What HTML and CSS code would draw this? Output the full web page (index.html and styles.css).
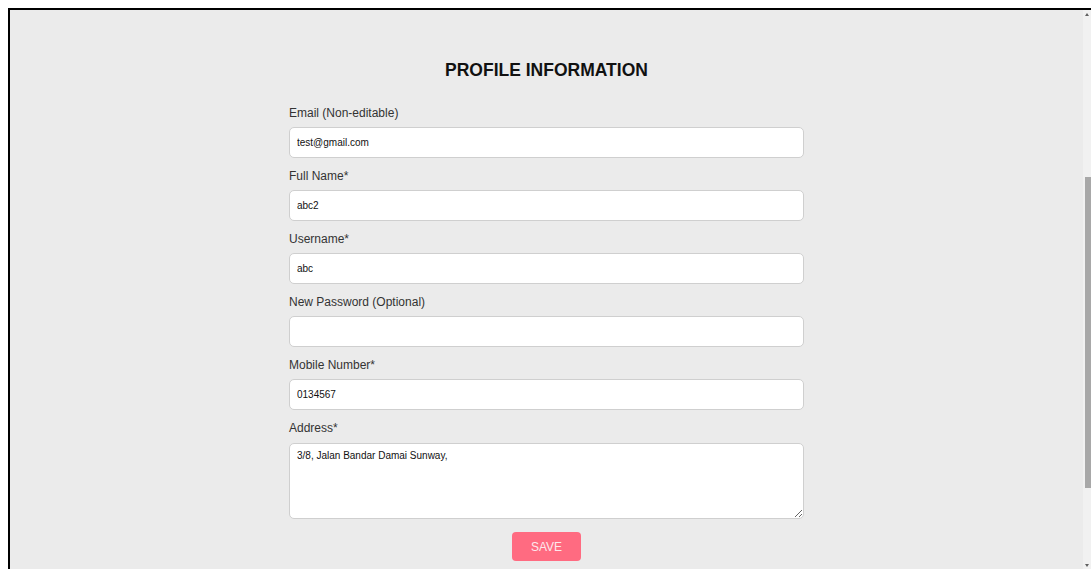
FILE: index.html
```html
<!DOCTYPE html>
<html lang="en">
<head>
<meta charset="utf-8">
<title>Profile Information</title>
<link rel="stylesheet" href="styles.css">
</head>
<body>
  <div class="frame">
    <main class="page">
      <form class="profile-form">
        <h1 class="form-title">PROFILE INFORMATION</h1>

        <label class="field-label" for="email">Email (Non-editable)</label>
        <input class="field-input" id="email" type="text" value="test@gmail.com" readonly>

        <label class="field-label" for="fullname">Full Name*</label>
        <input class="field-input" id="fullname" type="text" value="abc2">

        <label class="field-label" for="username">Username*</label>
        <input class="field-input" id="username" type="text" value="abc">

        <label class="field-label" for="password">New Password (Optional)</label>
        <input class="field-input" id="password" type="password" value="">

        <label class="field-label" for="mobile">Mobile Number*</label>
        <input class="field-input" id="mobile" type="text" value="0134567">

        <label class="field-label" for="address">Address*</label>
        <textarea class="field-input field-area" id="address">3/8, Jalan Bandar Damai Sunway,</textarea>

        <div class="actions">
          <button class="save-btn" type="button">SAVE</button>
        </div>
      </form>
    </main>
    <div class="scrollbar">
      <span class="arrow arrow-up"></span>
      <div class="track">
        <div class="thumb"></div>
      </div>
      <span class="arrow arrow-down"></span>
    </div>
  </div>
</body>
</html>
```

FILE: styles.css
```css
html, body {
  margin: 0;
  padding: 0;
  height: 100%;
  overflow: hidden;
  background: #ffffff;
}

.frame {
  display: flex;
  margin: 8px 0 0 8px;
  height: calc(100% - 8px);
  box-sizing: border-box;
  border-top: 2px solid #000;
  border-left: 2px solid #000;
  background: #ebebeb;
  font-family: "Liberation Sans", Arial, sans-serif;
  color: #222;
}

.page {
  flex: 1;
  display: flex;
  justify-content: center;
}

.profile-form {
  width: 515px;
  display: flex;
  flex-direction: column;
  padding-top: 50px;
}

.form-title {
  margin: 0 0 24px;
  font-size: 17.5px;
  line-height: 20px;
  font-weight: bold;
  text-align: center;
  color: #111;
}

.field-label {
  font-size: 12px;
  line-height: 15px;
  padding-top: 2px;
  color: #333;
  margin-bottom: 6px;
}

.field-input {
  box-sizing: border-box;
  height: 31px;
  margin: 0 0 9px;
  padding: 0 7px;
  border: 1px solid #cfcfcf;
  border-radius: 5px;
  background: #fff;
  font-family: "Liberation Sans", Arial, sans-serif;
  font-size: 10px;
  color: #111;
  outline: none;
}

.field-area {
  height: 76px;
  margin-top: 1px;
  padding: 6px 7px;
  resize: vertical;
  margin-bottom: 13px;
}

.actions {
  display: flex;
  justify-content: center;
}

.save-btn {
  width: 69px;
  height: 29px;
  border: none;
  border-radius: 4px;
  background: #ff6b81;
  color: #fde8ec;
  font-family: "Liberation Sans", Arial, sans-serif;
  font-size: 12px;
  padding: 0;
}

/* vertical scrollbar at the right edge of the window */
.scrollbar {
  width: 8px;
  display: flex;
  flex-direction: column;
  background: #f1f1f1;
}

.track {
  flex: 1;
  padding-top: 159px;
}

.thumb {
  margin-left: 2px;
  height: 311px;
  background: #a8a8a8;
}

.arrow {
  display: block;
  height: 8px;
  position: relative;
}

.arrow::after {
  content: "";
  position: absolute;
  left: 2px;
  border-left: 2.5px solid transparent;
  border-right: 2.5px solid transparent;
}

.arrow-up::after {
  top: 3px;
  border-bottom: 3px solid #606060;
}

.arrow-down::after {
  top: 3px;
  border-top: 3px solid #606060;
}
```
